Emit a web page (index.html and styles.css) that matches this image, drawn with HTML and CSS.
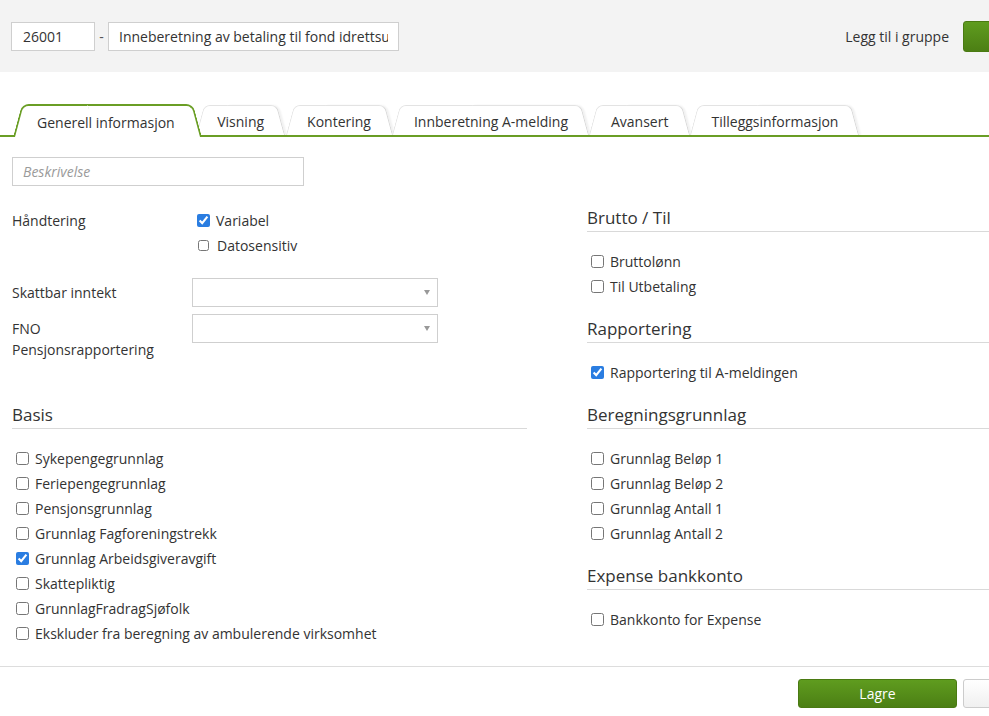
FILE: index.html
```html
<!DOCTYPE html>
<html lang="no">
<head>
<meta charset="utf-8">
<title>Lønnsart</title>
<link rel="stylesheet" href="styles.css">
</head>
<body>
<div class="page">
  <header class="header">
    <input class="inp code" type="text" value="26001">
    <span class="dash">-</span>
    <input class="inp name" type="text" value="Inneberetning av betaling til fond idrettsutøvere">
    <span class="group-label">Legg til i gruppe</span>
    <button class="btn btn-green btn-head" type="button" aria-label="Legg til"></button>
  </header>

  <nav class="tabs">
    <div class="tab active">Generell informasjon</div>
    <div class="tab">Visning</div>
    <div class="tab">Kontering</div>
    <div class="tab">Innberetning A-melding</div>
    <div class="tab">Avansert</div>
    <div class="tab">Tilleggsinformasjon</div>
  </nav>

  <main class="content">
    <input class="inp desc" type="text" placeholder="Beskrivelse">

    <div class="cols">
      <section class="col col-left">
        <div class="row row-hand">
          <div class="lbl">Håndtering</div>
          <div class="checks">
            <label class="chk"><input type="checkbox" checked><span>Variabel</span></label>
            <label class="chk"><input class="small" type="checkbox"><span>Datosensitiv</span></label>
          </div>
        </div>
        <div class="row row-sel first">
          <div class="lbl">Skattbar inntekt</div>
          <div class="select"></div>
        </div>
        <div class="row row-sel">
          <div class="lbl">FNO<br>Pensjonsrapportering</div>
          <div class="select"></div>
        </div>

        <h3 class="sec basis">Basis</h3>
        <div class="list">
          <label class="chk"><input type="checkbox"><span>Sykepengegrunnlag</span></label>
          <label class="chk"><input type="checkbox"><span>Feriepengegrunnlag</span></label>
          <label class="chk"><input type="checkbox"><span>Pensjonsgrunnlag</span></label>
          <label class="chk"><input type="checkbox"><span>Grunnlag Fagforeningstrekk</span></label>
          <label class="chk"><input type="checkbox" checked><span>Grunnlag Arbeidsgiveravgift</span></label>
          <label class="chk"><input type="checkbox"><span>Skattepliktig</span></label>
          <label class="chk"><input type="checkbox"><span>GrunnlagFradragSjøfolk</span></label>
          <label class="chk"><input type="checkbox"><span>Ekskluder fra beregning av ambulerende virksomhet</span></label>
        </div>
      </section>

      <section class="col col-right">
        <h3 class="sec">Brutto / Til</h3>
        <div class="list">
          <label class="chk"><input type="checkbox"><span>Bruttolønn</span></label>
          <label class="chk"><input type="checkbox"><span>Til Utbetaling</span></label>
        </div>
        <h3 class="sec">Rapportering</h3>
        <div class="list">
          <label class="chk"><input type="checkbox" checked><span>Rapportering til A-meldingen</span></label>
        </div>
        <h3 class="sec">Beregningsgrunnlag</h3>
        <div class="list">
          <label class="chk"><input type="checkbox"><span>Grunnlag Beløp 1</span></label>
          <label class="chk"><input type="checkbox"><span>Grunnlag Beløp 2</span></label>
          <label class="chk"><input type="checkbox"><span>Grunnlag Antall 1</span></label>
          <label class="chk"><input type="checkbox"><span>Grunnlag Antall 2</span></label>
        </div>
        <h3 class="sec">Expense bankkonto</h3>
        <div class="list">
          <label class="chk"><input type="checkbox"><span>Bankkonto for Expense</span></label>
        </div>
      </section>
    </div>
  </main>

  <footer class="footer">
    <button class="btn btn-green" type="button">Lagre</button>
    <button class="btn btn-white" type="button" aria-label="Avbryt"></button>
  </footer>
</div>
</body>
</html>
```

FILE: styles.css
```css
html, body {
  margin: 0;
  padding: 0;
  background: #fff;
  overflow: hidden;
}

body {
  font-family: "Open Sans", "Liberation Sans", sans-serif;
  font-size: 14px;
  color: #333;
}

.page {
  width: 1134px;
}

/* ---------- header ---------- */
.header {
  height: 72px;
  background: #f3f3f3;
  display: flex;
  align-items: center;
  padding: 0 12px 0 11px;
}

.inp {
  box-sizing: border-box;
  height: 29px;
  border: 1px solid #cfcfcf;
  background: #fff;
  font-family: "Open Sans", "Liberation Sans", sans-serif;
  font-size: 14px;
  color: #333;
  padding: 0 10px;
  margin: 0;
  outline: none;
}

.code { width: 84px; padding-left: 11px; }
.name { width: 291px; }

.dash {
  width: 13px;
  text-align: center;
  color: #555;
}

.group-label {
  margin-left: auto;
  margin-right: 14px;
  color: #333;
}

.btn {
  box-sizing: border-box;
  width: 159px;
  height: 29px;
  border-radius: 3px;
  font-family: "Open Sans", "Liberation Sans", sans-serif;
  font-size: 14px;
  cursor: pointer;
}

.btn-green {
  border: 1px solid #4a7a12;
  background: linear-gradient(#5f9c1f, #4c7f14);
  color: #fff;
}

.btn-head { height: 31px; }

.btn-white {
  border: 1px solid #ccc;
  background: linear-gradient(#fff, #f0f0f0);
  color: #333;
}

/* ---------- tabs ---------- */
.tabs {
  margin-top: 33px;
  height: 30px;
  border-bottom: 2px solid #6a9e25;
  display: flex;
  align-items: flex-end;
  padding-left: 13px;
}

.tab {
  position: relative;
  z-index: 1;
  height: 30px;
  line-height: 33px;
  padding: 0 21.5px;
  white-space: nowrap;
  color: #333;
}

.tab::before,
.tab::after {
  content: "";
  position: absolute;
  top: 0;
  bottom: 0;
  width: 55%;
  background: #fff;
  border-top: 1px solid #e3e3e3;
  z-index: -1;
}

.tab::before {
  left: 0;
  border-left: 1px solid #e3e3e3;
  border-top-left-radius: 6px;
  transform: skewX(-15deg);
  transform-origin: bottom left;
}

.tab::after {
  right: 0;
  border-right: 1px solid #d6d6d6;
  border-top-right-radius: 6px;
  transform: skewX(15deg);
  transform-origin: bottom right;
  box-shadow: 2px 0 2px rgba(0, 0, 0, 0.06);
}

.tab.active {
  z-index: 3;
  height: 33px;
  line-height: 37px;
  margin-bottom: -2px;
  margin-right: -6px;
  padding: 0 27px 0 24px;
}

.tab.active::before,
.tab.active::after {
  border-color: #6a9e25;
  border-top-width: 2px;
  box-shadow: none;
}

.tab.active::before { border-left-width: 2px; border-top-left-radius: 7px; }
.tab.active::after { border-right-width: 2px; border-top-right-radius: 7px; }

/* ---------- content ---------- */
.content {
  padding: 20px 12px 0;
}

.desc {
  width: 292px;
  font-style: italic;
}

.desc::placeholder {
  color: #9a9a9a;
  font-style: italic;
}

.cols {
  display: grid;
  grid-template-columns: 515px 535px;
  column-gap: 60px;
  margin-top: 14px;
}

.row {
  display: flex;
  align-items: flex-start;
}

.row-hand {
  margin-top: 8px;
}

.row-hand .lbl {
  width: 185px;
  line-height: 25px;
}

.row-hand .chk input { margin-left: 0; }

.row-sel { margin-top: 7px; }
.row-sel.first { margin-top: 20px; }

.row-sel .lbl {
  width: 180px;
  padding-top: 4px;
  line-height: 21px;
}

.select {
  position: relative;
  box-sizing: border-box;
  width: 246px;
  height: 29px;
  border: 1px solid #cfcfcf;
  background: #fff;
}

.select::after {
  content: "";
  position: absolute;
  right: 7px;
  top: 11px;
  border-left: 3px solid transparent;
  border-right: 3px solid transparent;
  border-top: 5px solid #999;
}

.sec {
  margin: 18px 0 0;
  font-size: 17px;
  font-weight: normal;
  line-height: 24px;
  padding-bottom: 1px;
  border-bottom: 1px solid #d9d9d9;
  color: #333;
}

.col-right .sec:first-child { margin-top: 6px; }

.sec.basis { margin-top: 43px; }

.list {
  margin-top: 17px;
  display: flex;
  flex-direction: column;
}

.chk {
  display: flex;
  align-items: center;
  height: 25px;
  white-space: nowrap;
}

.chk input {
  width: 13px;
  height: 13px;
  margin: 0 6px 0 4px;
  accent-color: #2a7de1;
}

.chk input.small {
  width: 11px;
  height: 11px;
  margin-left: 1px;
  margin-right: 8px;
}

/* ---------- footer ---------- */
.footer {
  margin-top: 20px;
  border-top: 1px solid #ddd;
  padding: 12px 12px 0;
  display: flex;
  justify-content: flex-end;
  gap: 6px;
}

.footer .btn { height: 29px; }
```
